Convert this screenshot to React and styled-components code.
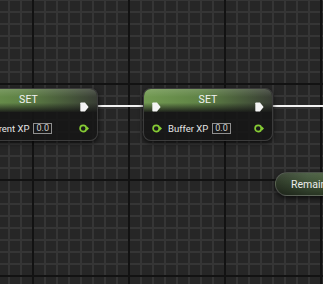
import React from "react";
import styled, { createGlobalStyle } from "styled-components";

const GlobalStyle = createGlobalStyle`
  html, body { margin: 0; padding: 0; background: #262626; }
  body { font-family: Roboto, "Liberation Sans", sans-serif; }
`;

const Canvas = styled.div`
  position: relative;
  width: 323px;
  height: 284px;
  overflow: hidden;
  background-color: #262626;
  background-image:
    linear-gradient(90deg, #121212 2px, transparent 2px),
    linear-gradient(0deg, #121212 2px, transparent 2px),
    linear-gradient(90deg, #353535 2px, transparent 2px),
    linear-gradient(0deg, #353535 2px, transparent 2px);
  background-size: 96px 96px, 96px 96px, 12px 12px, 12px 12px;
  background-position: 32px 0, 0 85px, 8px 0, 0 1px;
`;

const Wires = styled.svg`
  position: absolute;
  inset: 0;
  pointer-events: none;
`;

const Node = styled.div`
  position: absolute;
  box-sizing: border-box;
  height: 53px;
  border-radius: 8px;
  background: rgba(22, 22, 22, 0.9);
  border: 1px solid rgba(90, 90, 90, 0.55);
  box-shadow: 0 2px 5px rgba(0, 0, 0, 0.7);
  display: flex;
  flex-direction: column;
  overflow: hidden;
`;

const Header = styled.div`
  position: relative;
  height: 23px;
  display: flex;
  align-items: flex-start;
  background:
    linear-gradient(180deg, rgba(255,255,255,0.14) 0%, rgba(255,255,255,0) 35%, rgba(0,0,0,0) 60%, rgba(22,22,22,0.9) 100%),
    linear-gradient(90deg, #729a52 0%, #5f8245 45%, #46573a 80%, #383d34 100%);
`;

const Title = styled.div`
  flex: 1;
  text-align: center;
  padding-top: 4px;
  font-size: 10.5px;
  line-height: 13px;
  color: #f2f2f2;
  letter-spacing: 0.1px;
`;

const PinSlot = styled.div`
  box-sizing: border-box;
  width: 28px;
  padding-top: 13px;
  display: flex;
  justify-content: ${(p) => (p.$out ? "flex-end" : "flex-start")};
  padding-left: ${(p) => (p.$out ? 0 : 8)}px;
  padding-right: ${(p) => (p.$out ? 8 : 0)}px;
`;

const Body = styled.div`
  display: flex;
  align-items: center;
  padding: 11px 8px 0 8px;
  height: 11px;
`;

const Label = styled.span`
  font-size: 9.5px;
  color: #e6e6e6;
  margin-left: 6px;
  white-space: nowrap;
`;

const ValueBox = styled.span`
  box-sizing: border-box;
  height: 11px;
  padding: 0 2px;
  margin-left: 4px;
  border: 1px solid #8f8f8f;
  font-size: 9px;
  line-height: 9px;
  color: #d0d0d0;
  display: flex;
  align-items: center;
`;

const Spacer = styled.div`
  flex: 1;
`;

const VarNode = styled.div`
  position: absolute;
  box-sizing: border-box;
  height: 24px;
  padding-left: 15px;
  display: flex;
  align-items: center;
  border-radius: 12px;
  border: 1px solid rgba(110, 110, 110, 0.5);
  background:
    linear-gradient(180deg, rgba(255,255,255,0.08) 0%, rgba(0,0,0,0) 40%, rgba(0,0,0,0.4) 100%),
    linear-gradient(90deg, #2f3a29 0%, #41553a 40%, #4b6338 100%);
  box-shadow: 0 2px 5px rgba(0, 0, 0, 0.7);
  font-size: 10.5px;
  color: #ececec;
  white-space: nowrap;
`;

const ExecPin = () => (
  <svg width="9" height="10" viewBox="0 0 9 10">
    <path d="M1 0.5 H5 L8.6 5 L5 9.5 H1 Q0.3 9.5 0.3 8.8 V1.2 Q0.3 0.5 1 0.5 Z" fill="#f4f4f4" />
  </svg>
);

const DataPin = () => (
  <svg width="10" height="9" viewBox="0 0 10 9">
    <circle cx="4.2" cy="4.5" r="3.1" fill="#1a1a1a" stroke="#86cc34" strokeWidth="1.7" />
    <path d="M8 2.6 L10 4.5 L8 6.4 Z" fill="#86cc34" />
  </svg>
);

const SetNode = ({ left, width, label }) => (
  <Node style={{ left, top: 88, width }}>
    <Header>
      <PinSlot>
        <ExecPin />
      </PinSlot>
      <Title>SET</Title>
      <PinSlot $out>
        <ExecPin />
      </PinSlot>
    </Header>
    <Body>
      <DataPin />
      <Label>{label}</Label>
      <ValueBox>0.0</ValueBox>
      <Spacer />
      <DataPin />
    </Body>
  </Node>
);

export default function App() {
  return (
    <>
      <GlobalStyle />
      <Canvas>
        <Wires width="323" height="284">
          <line x1="88" y1="106" x2="150" y2="106" stroke="#f2f2f2" strokeWidth="2" />
          <line x1="262" y1="106" x2="323" y2="106" stroke="#f2f2f2" strokeWidth="2" />
        </Wires>
        <SetNode left={-41} width={139} label="Current XP" />
        <SetNode left={143} width={130} label="Buffer XP" />
        <VarNode style={{ left: 275, top: 172, width: 80 }}>Remaining XP</VarNode>
      </Canvas>
    </>
  );
}
